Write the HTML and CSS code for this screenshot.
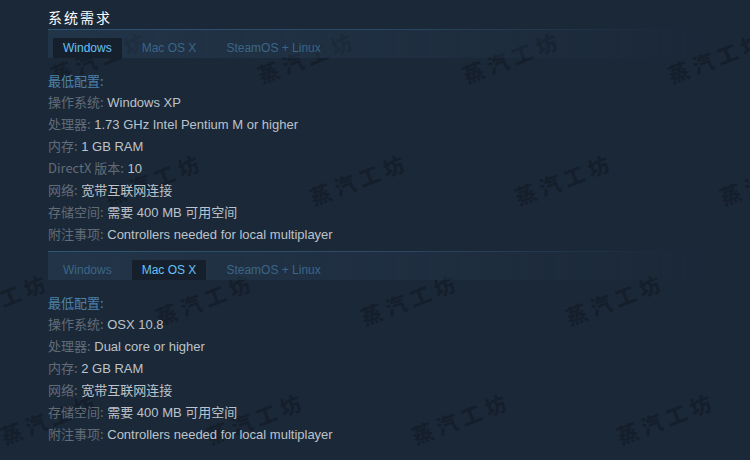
FILE: index.html
```html
<!DOCTYPE html>
<html lang="zh-CN">
<head>
<meta charset="utf-8">
<title>系统需求</title>
<link rel="stylesheet" href="styles.css">
</head>
<body>
<div class="page">
  <div class="watermarks" aria-hidden="true">
    <span class="wm" style="left:100px;top:57px">蒸汽工坊</span>
    <span class="wm" style="left:307px;top:57px">蒸汽工坊</span>
    <span class="wm" style="left:512px;top:57px">蒸汽工坊</span>
    <span class="wm" style="left:717px;top:57px">蒸汽工坊</span>
    <span class="wm" style="left:154px;top:179px">蒸汽工坊</span>
    <span class="wm" style="left:359px;top:179px">蒸汽工坊</span>
    <span class="wm" style="left:564px;top:179px">蒸汽工坊</span>
    <span class="wm" style="left:769px;top:179px">蒸汽工坊</span>
    <span class="wm" style="left:0px;top:299px">蒸汽工坊</span>
    <span class="wm" style="left:205px;top:299px">蒸汽工坊</span>
    <span class="wm" style="left:410px;top:299px">蒸汽工坊</span>
    <span class="wm" style="left:615px;top:299px">蒸汽工坊</span>
    <span class="wm" style="left:50px;top:418px">蒸汽工坊</span>
    <span class="wm" style="left:256px;top:418px">蒸汽工坊</span>
    <span class="wm" style="left:461px;top:418px">蒸汽工坊</span>
    <span class="wm" style="left:666px;top:418px">蒸汽工坊</span>
  </div>

  <div class="content">
    <h2 class="title">系统需求</h2>

    <div class="sysreq">
      <div class="tabs">
        <span class="tab active">Windows</span>
        <span class="tab">Mac OS X</span>
        <span class="tab">SteamOS + Linux</span>
      </div>
      <div class="req">
        <div class="req-head">最低配置:</div>
        <ul class="req-list">
          <li><span class="lbl">操作系统:</span> Windows XP</li>
          <li><span class="lbl">处理器:</span> 1.73 GHz Intel Pentium M or higher</li>
          <li><span class="lbl">内存:</span> 1 GB RAM</li>
          <li><span class="lbl">DirectX 版本:</span> 10</li>
          <li><span class="lbl">网络:</span> 宽带互联网连接</li>
          <li><span class="lbl">存储空间:</span> 需要 400 MB 可用空间</li>
          <li><span class="lbl">附注事项:</span> Controllers needed for local multiplayer</li>
        </ul>
      </div>
    </div>

    <div class="sysreq">
      <div class="tabs">
        <span class="tab">Windows</span>
        <span class="tab active">Mac OS X</span>
        <span class="tab">SteamOS + Linux</span>
      </div>
      <div class="req">
        <div class="req-head">最低配置:</div>
        <ul class="req-list">
          <li><span class="lbl">操作系统:</span> OSX 10.8</li>
          <li><span class="lbl">处理器:</span> Dual core or higher</li>
          <li><span class="lbl">内存:</span> 2 GB RAM</li>
          <li><span class="lbl">网络:</span> 宽带互联网连接</li>
          <li><span class="lbl">存储空间:</span> 需要 400 MB 可用空间</li>
          <li><span class="lbl">附注事项:</span> Controllers needed for local multiplayer</li>
        </ul>
      </div>
    </div>
  </div>
</div>
</body>
</html>
```

FILE: styles.css
```css
html, body {
  margin: 0;
  padding: 0;
  background: #1b2838;
}

.page {
  position: relative;
  width: 750px;
  height: 460px;
  overflow: hidden;
  background: #1b2838;
  font-family: Arial, "Liberation Sans", "Noto Sans CJK SC", sans-serif;
}

.watermarks {
  position: absolute;
  inset: 0;
  z-index: 0;
  pointer-events: none;
}

.wm {
  position: absolute;
  transform: translate(-50%, -50%) rotate(-21deg);
  font-family: "Noto Sans CJK SC", sans-serif;
  font-weight: 900;
  font-size: 21px;
  letter-spacing: 5px;
  line-height: 24px;
  white-space: nowrap;
  color: rgba(0, 0, 0, 0.22);
}

.content {
  position: relative;
  z-index: 1;
  padding: 8px 0 0 48px;
}

.title {
  margin: 0;
  height: 21px;
  font-family: "Noto Sans CJK SC", sans-serif;
  font-weight: normal;
  font-size: 14px;
  line-height: 18px;
  letter-spacing: 2px;
  color: #ffffff;
}

.sysreq {
  margin-bottom: 6px;
}

.tabs {
  display: flex;
  gap: 10px;
  height: 20px;
  padding: 8px 5px 0;
  border-top: 1px solid transparent;
  border-image: linear-gradient(to right, #2f5573 0%, #2a4a65 45%, rgba(27, 40, 56, 0) 88%) 1;
  background: linear-gradient(to right, rgba(40, 62, 85, 0.55) 0%, rgba(38, 58, 80, 0.35) 50%, rgba(27, 40, 56, 0) 92%);
}

.tab {
  padding: 0 10px;
  height: 20px;
  line-height: 20px;
  font-size: 12px;
  color: #3a6686;
}

.tab.active {
  background: #16202d;
  color: #66c0f4;
}

.req {
  padding-top: 13px;
  font-size: 13px;
  color: #bcc3ca;
}

.req-head {
  height: 20px;
  line-height: 20px;
  font-family: "Noto Sans CJK SC", sans-serif;
  color: #4c82ab;
}

.req-list {
  list-style: none;
  margin: 0;
  padding: 0;
}

.req-list li {
  height: 22px;
  line-height: 22px;
  white-space: nowrap;
}

.lbl {
  font-family: "Noto Sans CJK SC", sans-serif;
  color: #616c77;
}
```
